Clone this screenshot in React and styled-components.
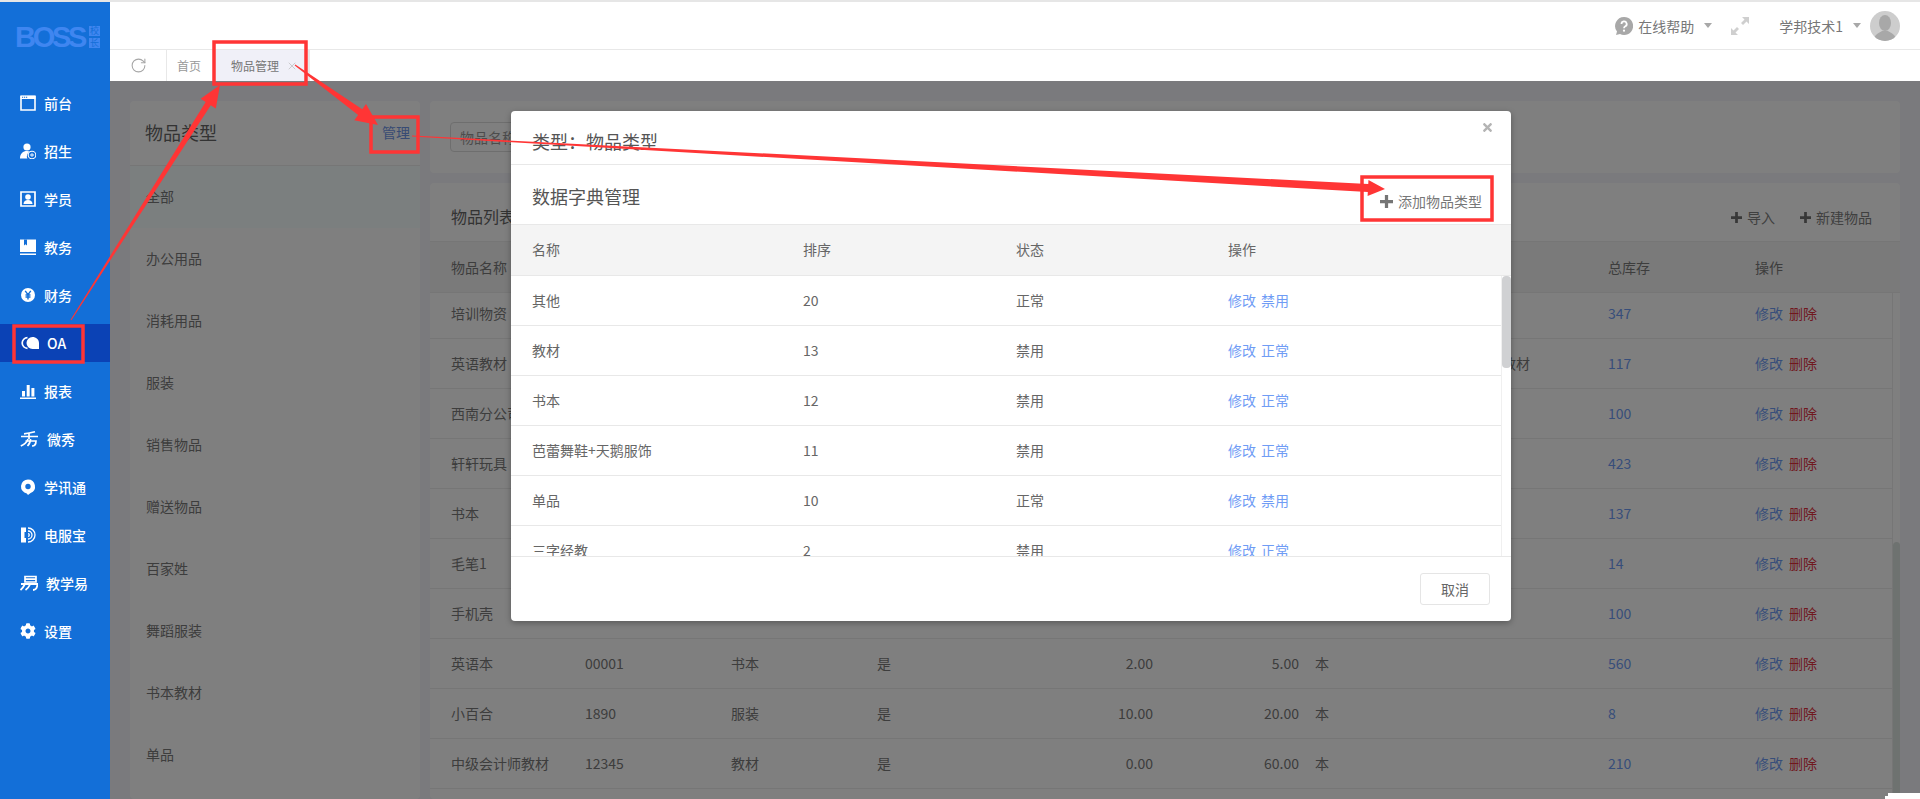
import styled, { createGlobalStyle } from 'styled-components';
import { FaCog, FaTimes } from 'react-icons/fa';
import { RotateCw, X } from 'lucide-react';

const GlobalStyle = createGlobalStyle`
  * { box-sizing: border-box; margin: 0; padding: 0; }
  html, body { height: 100%; overflow: hidden; }
  body {
    font-family: 'Noto Sans CJK SC', 'Noto Sans', sans-serif;
    font-size: 14px;
    color: #666;
    background: #fff;
  }
`;

const Page = styled.div`
  position: relative;
  display: flex;
  width: 1920px;
  height: 799px;
  overflow: hidden;
  border-top: 2px solid #e6e6e6;
`;

// left navigation
const Sidebar = styled.aside`
  flex: 0 0 110px;
  background: #136fd8;
  color: #fff;
`;

const Logo = styled.div`
  display: flex;
  align-items: center;
  gap: 2px;
  height: 82px;
  padding: 0 0 12px 15px;
  color: #3f86f0;
`;

const LogoWord = styled.span`
  font-family: 'Liberation Sans', sans-serif;
  font-size: 29px;
  font-weight: 700;
  line-height: 24px;
  letter-spacing: -3.3px;
  padding-right: 3px;
`;

const LogoStack = styled.div`
  display: flex;
  flex-direction: column;
  gap: 2px;
`;

const LogoChar = styled.span`
  width: 11px;
  height: 10px;
  background: #3f86f0;
  color: #136fd8;
  font-size: 9px;
  line-height: 10px;
  text-align: center;
`;

const NavItem = styled.div`
  display: flex;
  align-items: center;
  gap: 8px;
  height: 38px;
  margin-bottom: 10px;
  padding: 0 0 1px 20px;
  font-weight: 500;
  background: ${p => (p.$active ? '#0b42b5' : 'transparent')};
`;

const NavIcon = styled.svg`
  flex: none;
  width: ${p => p.$w || 16}px;
  height: 16px;
  fill: #fff;
`;

// top bars
const Main = styled.div`
  flex: 1;
  min-width: 0;
  display: flex;
  flex-direction: column;
`;

const TopBar = styled.header`
  flex: 0 0 48px;
  display: flex;
  align-items: center;
  justify-content: flex-end;
  padding: 0 20px 0 0;
  border-bottom: 1px solid #e8e8e8;
  color: #777;
`;

const HelpGroup = styled.div`
  display: flex;
  align-items: center;
  gap: 5px;
`;

const Caret = styled.i`
  width: 0;
  height: 0;
  margin-left: 5px;
  border-left: 4.5px solid transparent;
  border-right: 4.5px solid transparent;
  border-top: 5px solid #a8a8a8;
`;

const ExpandIcon = styled.svg`
  width: 18px;
  height: 18px;
  margin: 0 30px 0 19px;
  fill: #cfcfcf;
`;

const Avatar = styled.svg`
  width: 30px;
  height: 30px;
  margin-left: 9px;
  border-radius: 50%;
  background: #cdcdcd;
  fill: #a8a8a8;
`;

const TabBar = styled.nav`
  flex: 0 0 31px;
  display: flex;
  font-size: 12px;
  color: #999;
`;

const RefreshCell = styled.div`
  flex: 0 0 57px;
  display: flex;
  align-items: center;
  justify-content: center;
  border-right: 1px solid #e8e8e8;
  color: #a6a6a6;
`;

const Tab = styled.div`
  display: flex;
  align-items: center;
  justify-content: space-between;
  width: ${p => p.$w}px;
  padding: 0 10px 0 ${p => p.$pad}px;
  background: ${p => (p.$active ? '#f0f0f8' : 'transparent')};
  color: ${p => (p.$active ? '#777' : '#999')};
  border-right: ${p => (p.$active ? '2px solid #e8e8e8' : 'none')};
`;

const TabClose = styled(X)`
  width: 12px;
  height: 12px;
  color: #b0b0b0;
`;

// page content, dimmed by the overlay
const Content = styled.main`
  position: relative;
  flex: 1;
  min-height: 0;
  display: flex;
  gap: 10px;
  padding: 20px 20px 0;
  background: #f4f4fa;
  overflow: hidden;
`;

const Card = styled.section`
  background: #fff;
  border-radius: 4px;
`;

const TypePanel = styled(Card)`
  flex: 0 0 290px;
`;

const TypeHead = styled.div`
  display: flex;
  align-items: center;
  justify-content: space-between;
  height: 65px;
  padding: 0 10px 3px 15px;
  border-bottom: 1px solid #ececec;
  font-size: 18px;
  color: #666;
`;

const ManageLink = styled.a`
  font-size: 14px;
  color: #7096e8;
`;

const TypeItem = styled.div`
  display: flex;
  align-items: center;
  height: 62px;
  padding: 0 0 2px 16px;
  color: #7a7a7a;
  background: ${p => (p.$active ? '#f6feff' : 'transparent')};
`;

const RightColumn = styled.div`
  flex: 1;
  min-width: 0;
  display: flex;
  flex-direction: column;
  gap: 10px;
`;

const SearchCard = styled(Card)`
  flex: 0 0 72px;
  padding: 21px 20px;
`;

const SearchInput = styled.div`
  width: 200px;
  height: 30px;
  padding-left: 9px;
  border: 1px solid #ddd;
  border-radius: 4px;
  line-height: 28px;
  color: #999;
`;

const ListCard = styled(Card)`
  flex: 1;
  min-height: 0;
  display: flex;
  flex-direction: column;
  overflow: hidden;
`;

const ListHead = styled.div`
  flex: 0 0 59px;
  display: flex;
  align-items: center;
  justify-content: space-between;
  padding: 8px 28px 0 21px;
  border-bottom: 1px solid #ececec;
`;

const ListTitle = styled.h2`
  font-size: 16px;
  font-weight: 400;
  color: #666;
`;

const ListActions = styled.div`
  display: flex;
  gap: 25px;
  color: #808080;
  padding-top: 2px;
`;

const ActionLink = styled.span`
  display: flex;
  align-items: center;
  gap: 5px;
`;

const PlusIcon = styled.svg`
  width: ${p => p.$size || 11}px;
  height: ${p => p.$size || 11}px;
  fill: ${p => p.$color || '#707070'};
`;

const GoodsRow = styled.div`
  flex: none;
  display: grid;
  grid-template-columns: 134px 146px 146px 146px 130px 146px 175px 134px 147px 1fr;
  align-items: center;
  height: 50px;
  padding: 0 0 2px 21px;
  border-bottom: 1px solid #ececec;
  color: #7a7a7a;
`;

const GoodsHeadRow = styled(GoodsRow)`
  flex: 0 0 51px;
  height: 51px;
  padding-bottom: 0;
  background: #f4f4f4;
`;

const RightCell = styled.span`
  text-align: right;
`;

const UnitCell = styled.span`
  padding-left: 16px;
`;

const GoodsScroll = styled.div`
  flex: 1;
  min-height: 0;
  display: flex;
  overflow: hidden;
`;

const GoodsRows = styled.div`
  flex: 1;
  margin-top: -4px;
`;

const ScrollTrack = styled.div`
  flex: 0 0 ${p => p.$w}px;
  border-left: 1px solid ${p => p.$line};
`;

const ScrollThumb = styled.div`
  height: ${p => p.$h}px;
  margin-top: ${p => p.$top || 0}px;
  background: ${p => p.$color};
  border-radius: 4px;
`;

const StockLink = styled.span`
  color: #6f9cf5;
`;

const OpLink = styled.a`
  margin-right: 6px;
  color: ${p => (p.$danger ? '#e2303f' : '#6f9cf5')};
`;

// modal
const Overlay = styled.div`
  position: absolute;
  inset: 0;
  padding: 30px 0 0 401px;
  background: rgba(0, 0, 0, 0.5);
`;

const Modal = styled.div`
  display: flex;
  flex-direction: column;
  width: 1000px;
  height: 510px;
  background: #fff;
  border-radius: 4px;
  box-shadow: 0 2px 6px rgba(0, 0, 0, 0.3);
  overflow: hidden;
`;

const ModalTitle = styled.div`
  flex: 0 0 54px;
  display: flex;
  justify-content: space-between;
  padding: 17px 17px 0 21px;
  border-bottom: 1px solid #e8e8e8;
  font-size: 18px;
  line-height: 26px;
  color: #555;
`;

const ModalClose = styled(FaTimes)`
  width: 13px;
  height: 13px;
  margin-top: -7px;
  color: #b4b4b4;
`;

const ModalSub = styled.div`
  flex: 0 0 60px;
  display: flex;
  justify-content: space-between;
  padding: 18px 29px 0 21px;
  border-bottom: 1px solid #e8e8e8;
  font-size: 18px;
  line-height: 26px;
  color: #555;
`;

const AddType = styled.span`
  display: flex;
  align-items: center;
  gap: 5px;
  height: 26px;
  margin-top: 5px;
  font-size: 14px;
  color: #777;
`;

const DictRow = styled.div`
  display: grid;
  grid-template-columns: 271px 213px 212px 1fr;
  align-items: center;
  height: 50px;
  padding: 0 0 2px 21px;
  border-bottom: 1px solid #e8e8e8;
`;

const DictHead = styled(DictRow)`
  flex: 0 0 51px;
  height: 51px;
  background: #f4f4f4;
`;

const DictScroll = styled.div`
  flex: 0 0 280px;
  display: flex;
  overflow: hidden;
`;

const DictRows = styled.div`
  flex: 1;
`;

const DictOps = styled.span`
  display: flex;
  gap: 5px;
  color: #6f9cf5;
`;

const ModalFoot = styled.div`
  flex: 1;
  display: flex;
  justify-content: flex-end;
  padding: 16px 21px 0;
  border-top: 1px solid #e8e8e8;
`;

const CancelButton = styled.button`
  width: 70px;
  height: 32px;
  border: 1px solid #e5e5e5;
  border-radius: 3px;
  background: #fff;
  font: inherit;
  color: #666;
`;

// red marks laid on top of the screenshot
const Marks = styled.svg`
  position: absolute;
  left: 0;
  top: -2px;
  width: 1920px;
  height: 799px;
  pointer-events: none;
`;

const MarkBox = styled.rect`
  fill: none;
  stroke: #ff3535;
  stroke-width: 3.5px;
`;

const MarkArrow = styled.polygon`
  fill: #ff3535;
`;

const arrow = (x1, y1, x2, y2, w0, w1, len, half) => {
  const d = Math.hypot(x2 - x1, y2 - y1);
  const ux = (x2 - x1) / d;
  const uy = (y2 - y1) / d;
  const nx = -uy;
  const ny = ux;
  const bx = x2 - ux * len;
  const by = y2 - uy * len;
  const pts = [
    [x1 + (nx * w0) / 2, y1 + (ny * w0) / 2],
    [bx + (nx * w1) / 2, by + (ny * w1) / 2],
    [bx + nx * half, by + ny * half],
    [x2, y2],
    [bx - nx * half, by - ny * half],
    [bx - (nx * w1) / 2, by - (ny * w1) / 2],
    [x1 - (nx * w0) / 2, y1 - (ny * w0) / 2],
  ];
  return pts.map(p => p.join(',')).join(' ');
};

const icons = {
  front: (
    <>
      <path d="M1 1.500h14v13.500H1z" fill="none" stroke="#fff" strokeWidth="1.600" />
      <path d="M.5 .5h15v3.500H.5z" />
      <path d="M2 1.700h1.200v1H2zM4 1.700h1.200v1H4zM6 1.700h1.200v1H6z" fill="#136fd8" />
    </>
  ),
  enroll: (
    <>
      <circle cx="7" cy="4" r="3.600" />
      <path d="M0 15.500c0-5 3-7.500 7-7.500 1.200 0 2.200.2 3 .7a5 5 0 0 0-2.600 6.800z" />
      <circle cx="12" cy="12" r="3.800" fill="none" stroke="#fff" strokeWidth="1.100" />
      <path d="M10 11.600h4v.8h-4zM11.600 10h.8v4h-.8z" />
    </>
  ),
  student: (
    <>
      <path d="M1 1h14v14H1z" fill="none" stroke="#fff" strokeWidth="1.700" />
      <circle cx="8" cy="6" r="2.800" />
      <path d="M3.500 13c0-2.600 2-4 4.500-4s4.500 1.400 4.500 4z" />
    </>
  ),
  course: (
    <>
      <path d="M0 .5h16v12.500H0z" />
      <path d="M0 14.500h16V16H0z" />
      <path d="M4 .5h3v6L5.500 5.300 4 6.500z" fill="#136fd8" />
    </>
  ),
  finance: (
    <>
      <circle cx="8" cy="8" r="7" />
      <path d="M5.200 3.800 8 7.600l2.800-3.800M8 7.600v4.800M5.500 8h5M5.500 10h5" fill="none" stroke="#136fd8" strokeWidth="1.400" />
    </>
  ),
  oa: (
    <>
      <path d="M7.500 2.700a5.300 5.300 0 1 0 0 10.600" fill="none" stroke="#fff" strokeWidth="1.700" />
      <path d="M6.500 8a6 6 0 0 1 6-6c3.500 0 6.500 2.500 6.500 6v6h-6.500a6 6 0 0 1-6-6z" />
    </>
  ),
  report: <path d="M2 8h3v5.500H2zM6.700 2h3v11.500h-3zM11.400 5h3v8.500h-3zM0 14.500h16V16H0z" />,
  show: (
    <path
      d="M15 .8Q9 2.500 4 2.800M1 5.500h17M9 2.500v5.500M8 8Q6.500 12.500 .8 15M5.500 10h10.500Q16 15 12 15M10.500 8 Q10.500 12 7.500 15"
      fill="none"
      stroke="#fff"
      strokeWidth="1.700"
    />
  ),
  notice: (
    <>
      <path d="M8 .5a7 7 0 0 1 2.600 13.500L8 16l-1.200-1.600A7 7 0 0 1 8 .5z" />
      <circle cx="8" cy="7.500" r="2.700" fill="#136fd8" />
    </>
  ),
  phone: (
    <>
      <path d="M1 .5h5v4.500H4.500v6H6v4.500H1z" />
      <path d="M8 1a7 7 0 0 1 0 14M8 4a4 4 0 0 1 0 8M8 6.700a1.300 1.300 0 0 1 0 2.600" fill="none" stroke="#fff" strokeWidth="1.300" />
    </>
  ),
  teach: (
    <>
      <path d="M5 1.500h11v5.500H5zM5 4.200h11" fill="none" stroke="#fff" strokeWidth="1.700" />
      <path d="M1 9h16.500Q17 15 13 15M5 9 Q3 13 .5 15M10 9.500 Q8.500 13 5.500 15" fill="none" stroke="#fff" strokeWidth="1.800" />
    </>
  ),
};

const navItems = [
  ['front', '前台'],
  ['enroll', '招生'],
  ['student', '学员'],
  ['course', '教务'],
  ['finance', '财务'],
  ['oa', 'OA', 19, true],
  ['report', '报表'],
  ['show', '微秀', 19],
  ['notice', '学讯通'],
  ['phone', '电服宝'],
  ['teach', '教学易', 18],
  ['cog', '设置'],
];

const typeItems = ['全部', '办公用品', '消耗用品', '服装', '销售物品', '赠送物品', '百家姓', '舞蹈服装', '书本教材', '单品'];

// columns behind the modal stay empty, only what shows is filled in
const goods = [
  ['培训物资', '', '', '', '', '', '', '', '347'],
  ['英语教材', '', '', '', '', '', '', '英语教材', '117'],
  ['西南分公司', '', '', '', '', '', '', '', '100'],
  ['轩轩玩具', '', '', '', '', '', '', '', '423'],
  ['书本', '', '', '', '', '', '', '', '137'],
  ['毛笔1', '', '', '', '', '', '', '', '14'],
  ['手机壳', '', '', '', '', '', '', '', '100'],
  ['英语本', '00001', '书本', '是', '2.00', '5.00', '本', '', '560'],
  ['小百合', '1890', '服装', '是', '10.00', '20.00', '本', '', '8'],
  ['中级会计师教材', '12345', '教材', '是', '0.00', '60.00', '本', '', '210'],
  [],
];

const dict = [
  ['其他', '20', '正常', '禁用'],
  ['教材', '13', '禁用', '正常'],
  ['书本', '12', '禁用', '正常'],
  ['芭蕾舞鞋+天鹅服饰', '11', '禁用', '正常'],
  ['单品', '10', '正常', '禁用'],
  ['三字经教', '2', '禁用', '正常'],
];

const Plus = props => (
  <PlusIcon viewBox="0 0 12 12" {...props}>
    <path d="M4.500 0h3v4.500H12v3H7.500V12h-3V7.500H0v-3h4.500z" />
  </PlusIcon>
);

export default function App() {
  return (
    <>
      <GlobalStyle />
      <Page>
        <Sidebar>
          <Logo>
            <LogoWord>BOSS</LogoWord>
            <LogoStack>
              <LogoChar>校</LogoChar>
              <LogoChar>长</LogoChar>
            </LogoStack>
          </Logo>
          {navItems.map(([icon, label, w, active]) => (
            <NavItem key={label} $active={active}>
              {icon === 'cog' ? (
                <FaCog size={16} />
              ) : (
                <NavIcon $w={w} viewBox={`0 0 ${w || 16} 16`}>{icons[icon]}</NavIcon>
              )}
              {label}
            </NavItem>
          ))}
        </Sidebar>

        <Main>
          <TopBar>
            <HelpGroup>
              <svg width="18" height="18" viewBox="0 0 18 18">
                <path d="M9 0a9 9 0 1 1-4 17L1 18l1-3.500A9 9 0 0 1 9 0z" fill="#a8a8a8" />
                <path d="M6.500 7a2.600 2.600 0 1 1 3.800 2.300c-.9.500-1.300 1-1.300 2" fill="none" stroke="#fff" strokeWidth="1.800" />
                <circle cx="9" cy="13.700" r="1.100" fill="#fff" />
              </svg>
              在线帮助
              <Caret />
            </HelpGroup>
            <ExpandIcon viewBox="0 0 18 18">
              <path d="M11 0h7v7l-2.500-2.500L12 8l-2-2 3.500-3.500zM7 18H0v-7l2.500 2.500L6 10l2 2-3.500 3.500z" />
            </ExpandIcon>
            <HelpGroup>
              学邦技术1
              <Caret />
            </HelpGroup>
            <Avatar viewBox="0 0 30 30">
              <ellipse cx="15" cy="12" rx="6" ry="8" />
              <path d="M4 30c0-7 5-8 8-10h6c3 2 8 3 8 10z" />
            </Avatar>
          </TopBar>

          <TabBar>
            <RefreshCell>
              <RotateCw size={17} strokeWidth={1.5} />
            </RefreshCell>
            <Tab $w={47} $pad={10}>首页</Tab>
            <Tab $w={96} $pad={17} $active>
              物品管理
              <TabClose strokeWidth={1.2} />
            </Tab>
          </TabBar>

          <Content>
            <TypePanel>
              <TypeHead>
                物品类型
                <ManageLink>管理</ManageLink>
              </TypeHead>
              {typeItems.map((name, i) => (
                <TypeItem key={name} $active={i === 0}>{name}</TypeItem>
              ))}
            </TypePanel>

            <RightColumn>
              <SearchCard>
                <SearchInput>物品名称</SearchInput>
              </SearchCard>
              <ListCard>
                <ListHead>
                  <ListTitle>物品列表</ListTitle>
                  <ListActions>
                    <ActionLink><Plus />导入</ActionLink>
                    <ActionLink><Plus />新建物品</ActionLink>
                  </ListActions>
                </ListHead>
                <GoodsHeadRow>
                  <span>物品名称</span>
                  <span />
                  <span />
                  <span />
                  <span />
                  <span />
                  <span />
                  <span />
                  <span>总库存</span>
                  <span>操作</span>
                </GoodsHeadRow>
                <GoodsScroll>
                  <GoodsRows>
                    {goods.map((row, i) => (
                      <GoodsRow key={i}>
                        <span>{row[0]}</span>
                        <span>{row[1]}</span>
                        <span>{row[2]}</span>
                        <span>{row[3]}</span>
                        <RightCell>{row[4]}</RightCell>
                        <RightCell>{row[5]}</RightCell>
                        <UnitCell>{row[6]}</UnitCell>
                        <span>{row[7]}</span>
                        <StockLink>{row[8]}</StockLink>
                        {row.length > 0 && (
                          <span>
                            <OpLink>修改</OpLink>
                            <OpLink $danger>删除</OpLink>
                          </span>
                        )}
                      </GoodsRow>
                    ))}
                  </GoodsRows>
                  <ScrollTrack $w={8} $line="#ececec">
                    <ScrollThumb $h={300} $top={249} $color="#dde4e0" />
                  </ScrollTrack>
                </GoodsScroll>
              </ListCard>
            </RightColumn>

            <Overlay>
              <Modal>
                <ModalTitle>
                  类型：物品类型
                  <ModalClose />
                </ModalTitle>
                <ModalSub>
                  数据字典管理
                  <AddType><Plus $size={13} $color="#757575" />添加物品类型</AddType>
                </ModalSub>
                <DictHead>
                  <span>名称</span>
                  <span>排序</span>
                  <span>状态</span>
                  <span>操作</span>
                </DictHead>
                <DictScroll>
                  <DictRows>
                    {dict.map(row => (
                      <DictRow key={row[0]}>
                        <span>{row[0]}</span>
                        <span>{row[1]}</span>
                        <span>{row[2]}</span>
                        <DictOps>
                          <span>修改</span>
                          <span>{row[3]}</span>
                        </DictOps>
                      </DictRow>
                    ))}
                  </DictRows>
                  <ScrollTrack $w={10} $line="#f0f0f0">
                    <ScrollThumb $h={92} $color="#d0d1d3" />
                  </ScrollTrack>
                </DictScroll>
                <ModalFoot>
                  <CancelButton>取消</CancelButton>
                </ModalFoot>
              </Modal>
            </Overlay>
          </Content>
        </Main>

        <Marks viewBox="0 0 1920 799">
          <MarkBox x="214" y="42" width="92" height="42" />
          <MarkBox x="371" y="117" width="47" height="35" />
          <MarkBox x="14" y="326" width="69" height="36" />
          <MarkBox x="1362" y="177" width="130" height="43" />
          <MarkArrow points={arrow(71, 320, 220, 85, 1, 6, 22, 9)} />
          <MarkArrow points={arrow(295, 65, 378, 125, 1, 7, 22, 10)} />
          <MarkArrow points={arrow(412, 136, 1385, 189, 1, 8, 17, 8)} />
          <path d="M1885 799v-3h3v-3h32v6z" fill="#fff" />
        </Marks>
      </Page>
    </>
  );
}
